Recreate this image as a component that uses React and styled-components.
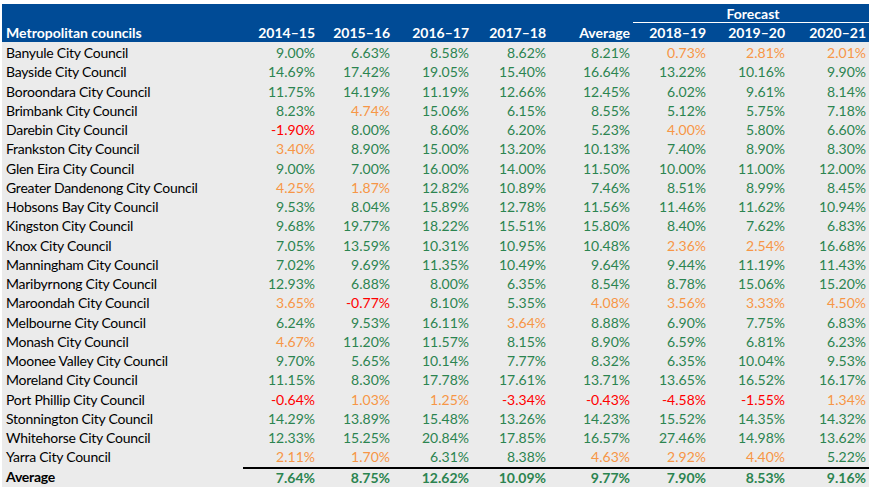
import React from 'react';
import styled, { createGlobalStyle } from 'styled-components';

const headerBlue = '#004b96';
const bodyGray = '#ebebeb';
const green = '#2b8450';
const orange = '#f79646';
const red = '#ff0000';

const cols = '241px 75px 75px 79px 77px 84px 76px 79px 81px';

const GlobalStyle = createGlobalStyle`
    body {
        margin: 0;
        background: #ffffff;
        font-family: Lato, "Liberation Sans", sans-serif;
    }
`

const Page = styled.div`
    padding: 4px 4px 4px 2px;
    width: 867px;
`

const Header = styled.div`
    background: ${headerBlue};
    color: #ffffff;
    font-weight: 700;
    font-size: 14px;
    display: grid;
    grid-template-columns: ${cols};
    grid-template-rows: 19px 19px;
`

const Forecast = styled.div`
    grid-column: 7 / 10;
    grid-row: 1;
    text-align: center;
    border-bottom: 1px solid #ffffff;
    line-height: 19px;
    padding-left: 4px;
`

const HeadCell = styled.div`
    grid-row: 2;
    line-height: 19px;
    text-align: ${({ $left }) => ($left ? 'left' : 'right')};
    padding: ${({ $left }) => ($left ? '0 0 0 4px' : '0 3px 0 0')};
    white-space: nowrap;
`

const Body = styled.div`
    background: ${bodyGray};
    padding-top: 1px;
    padding-bottom: 1px;
`

const Row = styled.div`
    display: grid;
    grid-template-columns: ${cols};
    height: 19.25px;
    line-height: 19.25px;
    font-size: 14px;
    font-weight: ${({ $bold }) => ($bold ? 700 : 400)};
`

const Name = styled.div`
    padding-left: 4px;
    color: #000000;
    white-space: nowrap;
    letter-spacing: -0.25px;
`

const Num = styled.div`
    text-align: right;
    padding-right: 3px;
    color: ${({ $v }) => ($v < 0 ? red : $v < 5 ? orange : green)};
    border-top: ${({ $rule }) => ($rule ? '2px solid #000' : 'none')};
    line-height: ${({ $rule }) => ($rule ? '17.25px' : 'inherit')};
`

const years = ['2014–15', '2015–16', '2016–17', '2017–18', 'Average', '2018–19', '2019–20', '2020–21'];

const councils = [
    ['Banyule City Council', 9.00, 6.63, 8.58, 8.62, 8.21, 0.73, 2.81, 2.01],
    ['Bayside City Council', 14.69, 17.42, 19.05, 15.40, 16.64, 13.22, 10.16, 9.90],
    ['Boroondara City Council', 11.75, 14.19, 11.19, 12.66, 12.45, 6.02, 9.61, 8.14],
    ['Brimbank City Council', 8.23, 4.74, 15.06, 6.15, 8.55, 5.12, 5.75, 7.18],
    ['Darebin City Council', -1.90, 8.00, 8.60, 6.20, 5.23, 4.00, 5.80, 6.60],
    ['Frankston City Council', 3.40, 8.90, 15.00, 13.20, 10.13, 7.40, 8.90, 8.30],
    ['Glen Eira City Council', 9.00, 7.00, 16.00, 14.00, 11.50, 10.00, 11.00, 12.00],
    ['Greater Dandenong City Council', 4.25, 1.87, 12.82, 10.89, 7.46, 8.51, 8.99, 8.45],
    ['Hobsons Bay City Council', 9.53, 8.04, 15.89, 12.78, 11.56, 11.46, 11.62, 10.94],
    ['Kingston City Council', 9.68, 19.77, 18.22, 15.51, 15.80, 8.40, 7.62, 6.83],
    ['Knox City Council', 7.05, 13.59, 10.31, 10.95, 10.48, 2.36, 2.54, 16.68],
    ['Manningham City Council', 7.02, 9.69, 11.35, 10.49, 9.64, 9.44, 11.19, 11.43],
    ['Maribyrnong City Council', 12.93, 6.88, 8.00, 6.35, 8.54, 8.78, 15.06, 15.20],
    ['Maroondah City Council', 3.65, -0.77, 8.10, 5.35, 4.08, 3.56, 3.33, 4.50],
    ['Melbourne City Council', 6.24, 9.53, 16.11, 3.64, 8.88, 6.90, 7.75, 6.83],
    ['Monash City Council', 4.67, 11.20, 11.57, 8.15, 8.90, 6.59, 6.81, 6.23],
    ['Moonee Valley City Council', 9.70, 5.65, 10.14, 7.77, 8.32, 6.35, 10.04, 9.53],
    ['Moreland City Council', 11.15, 8.30, 17.78, 17.61, 13.71, 13.65, 16.52, 16.17],
    ['Port Phillip City Council', -0.64, 1.03, 1.25, -3.34, -0.43, -4.58, -1.55, 1.34],
    ['Stonnington City Council', 14.29, 13.89, 15.48, 13.26, 14.23, 15.52, 14.35, 14.32],
    ['Whitehorse City Council', 12.33, 15.25, 20.84, 17.85, 16.57, 27.46, 14.98, 13.62],
    ['Yarra City Council', 2.11, 1.70, 6.31, 8.38, 4.63, 2.92, 4.40, 5.22],
];

const average = [7.64, 8.75, 12.62, 10.09, 9.77, 7.90, 8.53, 9.16];

const pct = (v) => v.toFixed(2) + '%';

export default function App() {
    return (
        <Page>
            <GlobalStyle />
            <Header>
                <Forecast>Forecast</Forecast>
                <HeadCell $left>Metropolitan councils</HeadCell>
                {years.map((y) => (
                    <HeadCell key={y}>{y}</HeadCell>
                ))}
            </Header>
            <Body>
                {councils.map(([name, ...vals]) => (
                    <Row key={name}>
                        <Name>{name}</Name>
                        {vals.map((v, i) => (
                            <Num key={i} $v={v}>{pct(v)}</Num>
                        ))}
                    </Row>
                ))}
                <Row $bold>
                    <Name>Average</Name>
                    {average.map((v, i) => (
                        <Num key={i} $v={v} $rule>{pct(v)}</Num>
                    ))}
                </Row>
            </Body>
        </Page>
    );
}
